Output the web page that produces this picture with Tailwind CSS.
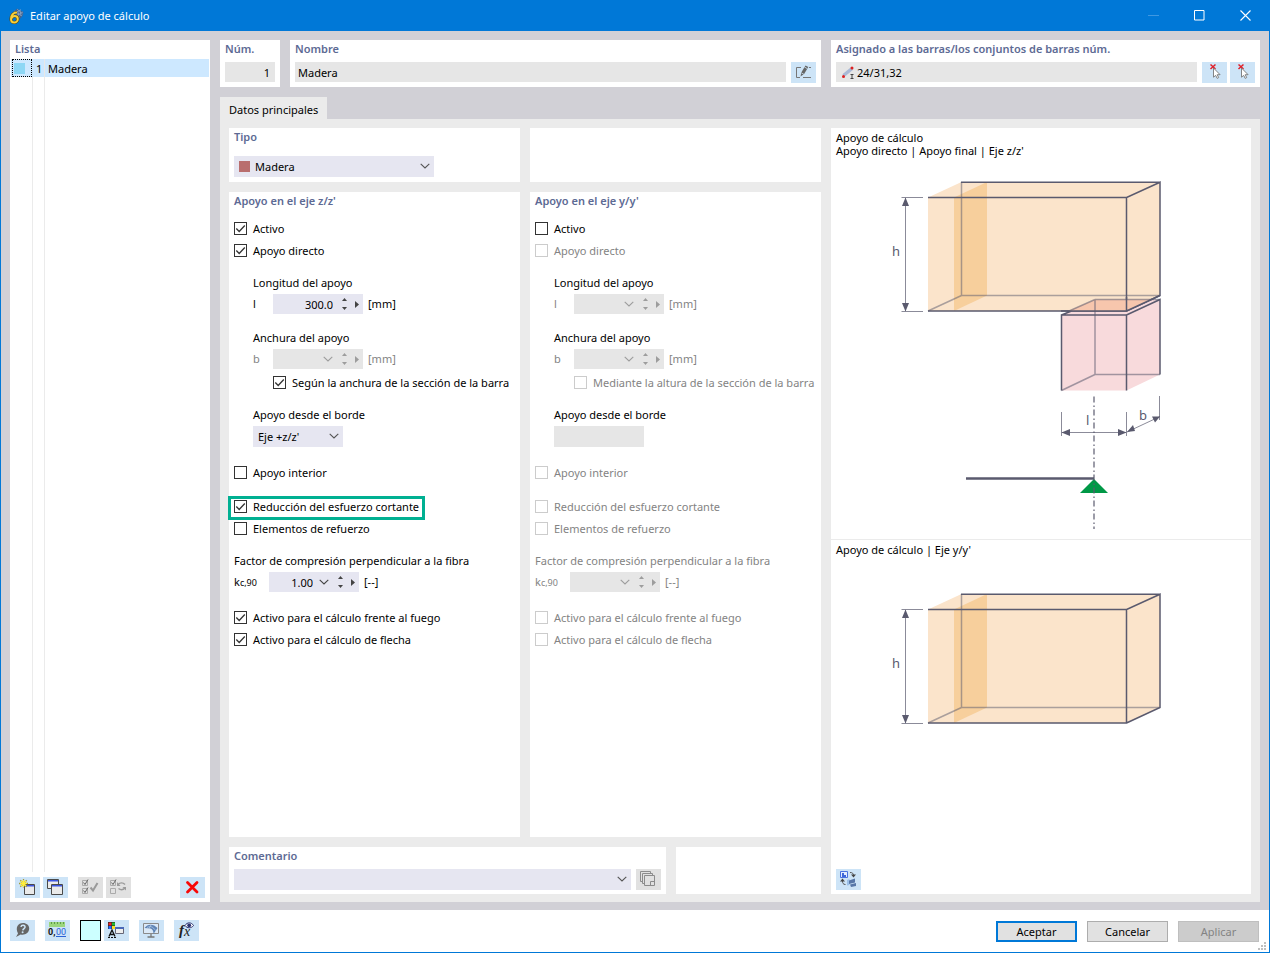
<!DOCTYPE html>
<html lang="es">
<head>
    <meta charset="UTF-8">
    <meta name="viewport" content="width=device-width, initial-scale=1.0">
    <title>Editar apoyo de cálculo</title>
    <!-- Tailwind CSS CDN -->
    <script src="https://cdn.jsdelivr.net/npm/@tailwindcss/browser@4"></script>
</head>
<body class="flex min-h-screen flex-col border border-[#0078d7] bg-white font-['Noto_Sans','Open_Sans',sans-serif] text-[11px] leading-[18px] text-black">

    <!-- Shared icons -->
    <svg class="hidden">
        <symbol id="chevron" viewBox="0 0 10 6"><path d="M.7.8 5 5 9.300.8" fill="none" stroke="currentColor" stroke-width="1.100"/></symbol>
        <symbol id="up" viewBox="0 0 5 3"><path d="M0 3 2.500 0 5 3z" fill="currentColor"/></symbol>
        <symbol id="down" viewBox="0 0 5 3"><path d="M0 0 2.500 3 5 0z" fill="currentColor"/></symbol>
        <symbol id="play" viewBox="0 0 4 7"><path d="M0 0 4 3.500 0 7z" fill="currentColor"/></symbol>
        <symbol id="tick" viewBox="0 0 13 13"><path d="M2.300 6.500 5.200 9.500 10.800 3.500" fill="none" stroke="#333" stroke-width="1.300"/></symbol>
        <symbol id="pick" viewBox="0 0 25 21">
            <path d="M8.500 2.500l5 4.500M13.500 2.500l-5 4.500" stroke="#e0202a" stroke-width="1.500"/>
            <path d="M11.500 6v9.200l2.200-1.800 1.500 3 1.500-.8-1.500-2.900h2.900z" fill="#fff" stroke="#777" stroke-width=".9"/>
        </symbol>
        <!-- Timber beam with the slab at its cut end -->
        <symbol id="beam" viewBox="0 0 420 160" overflow="visible">
            <path d="M97 39.500 130.500 24H329v113.500L295.500 153H97z" fill="#fbe4cb"/>
            <path d="M123 39.500 156 24v113.500L123 153z" fill="#f7cf9c"/>
            <path d="M130.500 24v113.500H329M97 153l33.500-15.500" fill="none" stroke="#5a5a6e" stroke-opacity=".5" stroke-width="1.500"/>
            <path d="M130 24.200H329M97 39.500H295.500M97 153H295.500V39.500L329 24.200V137.500L295.500 153" fill="none" stroke="#5a5a6e" stroke-width="1.500"/>
            <path d="M70.500 39.500H92M70.500 153.500H92M74.500 40V153" stroke="#5a5a6e" stroke-opacity=".7" fill="none"/>
            <path d="M74.500 39.500l3.500 8.500h-7zM74.500 153.500l3.500-8.500h-7z" fill="#5a5a6e"/>
            <text x="61" y="98" font-family="Noto Sans" font-size="13" fill="#5a5a6e">h</text>
        </symbol>
    </svg>

    <!-- Title bar -->
    <header class="flex h-[30px] items-center bg-[#0078d7] pr-px pl-[7px] text-white">
        <svg class="mr-[6px] h-4 w-4" viewBox="0 0 16 16">
            <path d="M4.500 4.500 9 0.500l6.500 3.500-1 4-3.500 4-2-5z" fill="#3f6393"/>
            <path d="M6 3l8 5M9 1l5.500 5M7 5l6-3.500M9 7l6-3M11 10l-1-7M13 8l-1-6" stroke="#a9b9cf" stroke-width=".5"/>
            <path d="M9 4.500C5 4.500 3 7.500 3 11c0 2 1.300 3.500 3.200 3.500S9.800 13 9.800 11 8.500 8 6.600 8C5.400 8 4 9 3.500 10.500" fill="none" stroke="#5b4a10" stroke-width="3.200"/>
            <path d="M9 4.500C5 4.500 3 7.500 3 11c0 2 1.300 3.500 3.200 3.500S9.800 13 9.800 11 8.500 8 6.600 8C5.400 8 4 9 3.500 10.500" fill="none" stroke="#f8cf3a" stroke-width="2"/>
        </svg>
        <h1 class="flex-1 text-[11px]">Editar apoyo de cálculo</h1>
        <button type="button" aria-label="Minimizar" disabled class="grid h-[30px] w-[46px] place-items-center text-[#3f98e2]">
            <svg class="h-[11px] w-[11px]" viewBox="0 0 11 11"><path d="M0 4.500h11" stroke="currentColor"/></svg>
        </button>
        <button type="button" aria-label="Maximizar" class="grid h-[28px] w-[46px] place-items-center self-start">
            <svg class="h-[11px] w-[11px]" viewBox="0 0 11 11"><path d="M.5.5h9.500v9.500H.5z" fill="none" stroke="currentColor"/></svg>
        </button>
        <button type="button" aria-label="Cerrar" class="grid h-[28px] w-[46px] place-items-center self-start">
            <svg class="h-[11px] w-[11px]" viewBox="0 0 11 11"><path d="M.5.5l10 10M10.500.5l-10 10" stroke="currentColor" stroke-width="1.100"/></svg>
        </button>
    </header>

    <main class="flex flex-1 gap-[10px] bg-[#d1d0d6] px-[9px] pt-[9px] pb-2">
        <!-- List of design supports -->
        <aside class="flex w-[200px] shrink-0 flex-col bg-white">
            <h2 class="px-[5px] font-semibold text-[#5d6a94]">Lista</h2>
            <ul class="flex flex-1 flex-col px-px pt-px">
                <li class="flex h-[18px] items-center bg-[#cde8ff] leading-5">
                    <span class="ml-px flex h-[18px] w-5 items-center border border-dotted border-black pl-px"><span class="h-[11px] w-[11px] bg-[#8dd7f5]"></span></span>
                    <span class="h-[18px] w-[13px] border-r border-[#e8e8e8] pl-1">1</span>
                    <span class="h-[18px] pl-[3px]">Madera</span>
                </li>
                <li class="flex flex-1" aria-hidden="true">
                    <span class="ml-[21px] w-[13px] border-x border-[#ebebeb]"></span>
                </li>
            </ul>
            <div class="flex h-[30px] items-center px-[5px]">
                <button type="button" aria-label="Nuevo" class="h-[21px] w-[25px] bg-[#cde4f7]">
                    <svg class="h-[21px] w-[25px]" viewBox="0 0 25 21">
                        <path d="M9.500 7.500h10v10h-10z" fill="#eaeaea" stroke="#4a4a4a"/><path d="M10 8h9v1.500h-9z" fill="#3c55e0"/>
                        <path d="M8.500 2v8.500M4 6.500h9M5.300 3.300l6.400 6.400M11.700 3.300l-6.400 6.400" stroke="#a39a3a" stroke-width="1.300"/><path d="M8.500 3v7M5 6.500h7M6 4l5 5M11 4 6 9" stroke="#ffee3c" stroke-width="1.200"/>
                    </svg>
                </button>
                <button type="button" aria-label="Copiar" class="ml-[3px] h-[21px] w-[25px] bg-[#cde4f7]">
                    <svg class="h-[21px] w-[25px]" viewBox="0 0 25 21">
                        <path d="M4.500 2.500h11v9h-11z" fill="#eaeaea" stroke="#4a4a4a"/><path d="M5 3h10v1.500H5z" fill="#3c55e0"/>
                        <path d="M8.500 7.500h11v10h-11z" fill="#eaeaea" stroke="#4a4a4a"/><path d="M9 8h10v1.500H9z" fill="#3c55e0"/>
                    </svg>
                </button>
                <button type="button" aria-label="Marcar todo" disabled class="ml-[10px] h-[21px] w-[25px] bg-[#e1e1e1]">
                    <svg class="h-[21px] w-[25px]" viewBox="0 0 25 21" fill="none" stroke="#666">
                        <path d="M4.500 3.500h5v5h-5zM4.500 11.500h5v5h-5z" stroke="#aaa"/><path d="M5.500 5.500l1.500 2 3-5M5.500 13.500l1.500 2 3-5"/><path d="M12.500 10.500l2.500 3 4.500-7.500" stroke="#9a9a9a" stroke-width="2"/>
                    </svg>
                </button>
                <button type="button" aria-label="Invertir marcas" disabled class="ml-[3px] h-[21px] w-[25px] bg-[#e1e1e1]">
                    <svg class="h-[21px] w-[25px]" viewBox="0 0 25 21" fill="none" stroke="#666">
                        <path d="M4.500 3.500h5v5h-5zM4.500 11.500h5v5h-5z" stroke="#aaa"/><path d="M5.500 5.500l1.500 2 3-5"/>
                        <path d="M12 7.500c2-2 5-2 7 0M19 11c-2 2-4.500 2-6.500.5" stroke="#9a9a9a" stroke-width="1.500"/><path d="M11 5v4h3.500zM20 13.500V10h-3.500z" fill="#9a9a9a" stroke="none"/>
                    </svg>
                </button>
                <button type="button" aria-label="Eliminar" class="ml-auto h-[21px] w-[25px] bg-[#cde4f7]">
                    <svg class="h-[21px] w-[25px]" viewBox="0 0 25 21"><path d="M7.500 5.500l9.500 9.500M17 5.500 7.500 15" stroke="#f80808" stroke-width="2.800" stroke-linecap="round"/></svg>
                </button>
            </div>
        </aside>

        <div class="flex min-w-0 flex-1 flex-col">
            <div class="flex gap-[10px]">
                <section class="w-[60px] bg-white px-[5px] pb-[5px]">
                    <label for="num" class="mb-1 block font-semibold text-[#5d6a94]">Núm.</label>
                    <input id="num" type="text" value="1" readonly class="block h-5 w-full bg-[#e6e6e6] pr-[5px] text-right">
                </section>
                <section class="min-w-0 flex-1 bg-white px-[5px] pb-1">
                    <label for="name" class="mb-1 block font-semibold text-[#5d6a94]">Nombre</label>
                    <div class="flex gap-[5px]">
                        <input id="name" type="text" value="Madera" readonly class="h-5 min-w-0 flex-1 bg-[#e6e6e6] px-[3px]">
                        <button type="button" aria-label="Editar nombre" class="h-[21px] w-[25px] bg-[#cde4f7]">
                            <svg class="h-[21px] w-[25px]" viewBox="0 0 25 21">
                                <path d="M10 5.500H5.500v10H9M12 15.500h8M18 5.500h2" fill="none" stroke="#777"/>
                                <path d="M9.500 14.500l.8-4 4.200-7 2.800 1.600-4.200 7z" fill="#666"/><path d="M10.300 10.800l2.600 1.500M13.500 5l2.700 1.600" stroke="#cde4f7" stroke-width=".8"/>
                            </svg>
                        </button>
                    </div>
                </section>
                <section class="w-[429px] bg-white px-[5px] pb-1">
                    <label for="members" class="mb-1 block font-semibold text-[#5d6a94]">Asignado a las barras/los conjuntos de barras núm.</label>
                    <div class="flex">
                        <div class="flex h-5 flex-1 items-center bg-[#e6e6e6] pl-[6px]">
                            <svg class="h-[13px] w-[13px]" viewBox="0 0 13 13">
                                <path d="M1.500 9.500 10 2.500" stroke="#a9b9d6" stroke-width="3.500"/><circle cx="1.500" cy="10.500" r="1.500" fill="#dd2020"/><circle cx="10" cy="2" r="1.500" fill="#dd2020"/>
                                <path d="M8.500 8.500h3M8.500 12.500h3M10 8.500v4" stroke="#444"/>
                            </svg>
                            <input id="members" type="text" value="24/31,32" readonly class="ml-[2px] h-5 min-w-0 flex-1 bg-transparent">
                        </div>
                        <button type="button" aria-label="Seleccionar barras" class="ml-[5px] h-[21px] w-[25px] bg-[#cde4f7]"><svg class="h-[21px] w-[25px]"><use href="#pick"/></svg></button>
                        <button type="button" aria-label="Seleccionar conjuntos" class="ml-[3px] h-[21px] w-[25px] bg-[#cde4f7]"><svg class="h-[21px] w-[25px]"><use href="#pick"/></svg></button>
                    </div>
                </section>
            </div>

            <nav class="mt-[10px] flex">
                <button type="button" class="h-[22px] bg-[#ebebeb] px-[9px] pt-1">Datos principales</button>
            </nav>

            <div class="flex flex-1 gap-[10px] bg-[#ebebeb] px-[9px] pt-[9px] pb-2">
                <div class="flex min-w-0 flex-1 flex-col gap-[10px]">
                    <div class="grid grid-cols-2 gap-[10px]">
                        <section class="h-[54px] bg-white px-[5px]">
                            <label for="type" class="mb-[10px] block font-semibold text-[#5d6a94]">Tipo</label>
                            <div class="relative h-[21px] w-[200px]">
                                <select id="type" class="h-[21px] w-full appearance-none bg-[#e6e6f1] pl-[21px]"><option>Madera</option></select>
                                <span class="pointer-events-none absolute top-[5px] left-[5px] h-[11px] w-[11px] bg-[#b96e6e]"></span>
                                <svg class="pointer-events-none absolute top-[7px] right-1 h-[6px] w-[10px] text-[#555]"><use href="#chevron"/></svg>
                            </div>
                        </section>
                        <section class="bg-white"></section>
                    </div>
                    <div id="axes" class="grid flex-1 grid-cols-2 gap-[10px]"></div>
                    <div class="flex gap-[10px]">
                        <section class="min-w-0 flex-1 bg-white px-[5px] pb-1">
                            <label for="comment" class="mb-1 block font-semibold text-[#5d6a94]">Comentario</label>
                            <div class="flex gap-[5px]">
                                <div class="relative flex-1">
                                    <select id="comment" class="block h-[21px] w-full appearance-none bg-[#e6e6f1]"><option></option></select>
                                    <svg class="pointer-events-none absolute top-[7px] right-1 h-[6px] w-[10px] text-[#555]"><use href="#chevron"/></svg>
                                </div>
                                <button type="button" aria-label="Comentarios guardados" disabled class="h-[21px] w-[25px] bg-[#e1e1e1]">
                                    <svg class="h-[21px] w-[25px]" viewBox="0 0 25 21" fill="none" stroke="#8c8c8c">
                                        <path d="M6.500 12.500h-2v-10h10v2M8.500 14.500h-2v-10h10v2M8.500 6.500h10v10h-10zM14.500 16.500v-4h4"/>
                                    </svg>
                                </button>
                            </div>
                        </section>
                        <section class="w-[145px] bg-white"></section>
                    </div>
                </div>

                <!-- Diagrams -->
                <section class="flex w-[420px] shrink-0 flex-col bg-white">
                    <div class="h-[411px] pt-[3px] leading-[13px]">
                        <p class="px-[5px]">Apoyo de cálculo</p>
                        <p class="px-[5px]">Apoyo directo | Apoyo final | Eje z/z'</p>
                        <svg class="mt-px h-[381px] w-full" viewBox="0 0 420 381">
                            <path d="M230.500 157 264 141.500H329v75L295.500 232.500h-65z" fill="#f8dadc"/>
                            <use href="#beam" width="420" height="160"/>
                            <path d="M237 153 264 141.500h56L295.500 153z" fill="#f7c6ad"/>
                            <path d="M264 141.500v75H329M230.500 232.500l33.500-16M264 141.500H329M237 153.500l27-12" fill="none" stroke="#5a5a6e" stroke-opacity=".55" stroke-width="1.500"/>
                            <path d="M230.500 232.500V157H295.500v75.500M295.500 157 329 141.500v75M230.500 157l10-4M295.500 153v-14M295.500 153 329 137.500M230 153h66" fill="none" stroke="#5a5a6e" stroke-width="1.500"/>
                            <path d="M230.500 254v24M295.500 254v24M328.500 238v24M231 274.500h64M296 274l33-15.500" fill="none" stroke="#5a5a6e" stroke-opacity=".7"/>
                            <path d="M230.500 274.500l8.500-3.500v7zM295.500 274.500l-8.500-3.500v7zM296 274l6-7 2 6zM329 258.500l-8 0 3 6z" fill="#5a5a6e"/>
                            <text x="255" y="267" font-family="Noto Sans" font-size="13" fill="#5a5a6e">l</text>
                            <text x="308" y="262" font-family="Noto Sans" font-size="13" fill="#5a5a6e">b</text>
                            <path d="M135 320.500h128" stroke="#5a5a6e" stroke-width="2.600"/>
                            <path d="M263 321l14 14h-28z" fill="#009846"/>
                            <path d="M263 238.500V371" stroke="#5a5a6e" stroke-opacity=".8" stroke-width="1.500" stroke-dasharray="6 3 1.500 2.500"/>
                        </svg>
                    </div>
                    <div class="border-t border-[#ebebeb] pt-[3px] leading-[13px]">
                        <p class="px-[5px]">Apoyo de cálculo | Eje y/y'</p>
                        <div class="pt-[14px]">
                            <svg class="h-[160px] w-full" viewBox="0 0 420 160"><use href="#beam" width="420" height="160"/></svg>
                        </div>
                    </div>
                    <button type="button" aria-label="Cambiar vista" class="mt-auto mb-1 ml-[5px] h-[21px] w-[25px] bg-[#cde4f7]">
                        <svg class="h-[21px] w-[25px]" viewBox="0 0 25 21">
                            <path d="M4.500 2.500h7v6h-7z" fill="#e3edff" stroke="#4a73e0"/><path d="M6 4h2v2h2v2H6z" fill="#3e68d8"/>
                            <path d="M14 3.500c2.500 0 3.500 1 3.500 3M9.500 15.500c-2.500 0-3-1.500-3-3.500" fill="none" stroke="#555"/><path d="M15 5.500h5l-2.500 3zM4 12.500h5l-2.500-3z" fill="#444"/>
                            <path d="M11 11l2.500-1v6l-2.500.5z" fill="#9cc0e8"/><path d="M13 11.500l6-2v4l-6 1.500zM14 15.500l6-1.500v3l-5 1z" fill="#5877a8"/>
                        </svg>
                    </button>
                </section>
            </div>
        </div>
    </main>

    <!-- Footer -->
    <footer class="relative flex h-[42px] shrink-0 items-start bg-white px-[9px] pt-[10px]">
        <button type="button" aria-label="Ayuda" class="h-[21px] w-[25px] bg-[#cde4f7]">
            <svg class="h-[21px] w-[25px]" viewBox="0 0 25 21"><path d="M6 17l2-3.500C5 7.500 8 3 13 3c3.500 0 6.200 2.300 6.200 5.500 0 4.500-4.500 7-8.500 6z" fill="#666"/><path d="M11 7c.3-2.500 4.500-2.100 4 .3-.3 1.300-2 1.300-2.200 3" fill="none" stroke="#cde4f7" stroke-width="1.500"/><circle cx="12.600" cy="12.300" r="1" fill="#cde4f7"/></svg>
        </button>
        <button type="button" aria-label="Unidades y decimales" class="ml-[10px] h-[21px] w-[25px] bg-[#cde4f7]">
            <svg class="h-[21px] w-[25px]" viewBox="0 0 25 21">
                <path d="M4 2h16v5H4z" fill="#9bd67d"/><path d="M6.500 2v2M9.500 2v2M12.500 2v2M15.500 2v2M18.500 2v2" stroke="#5f9c48"/>
                <text x="3" y="15" font-family="Roboto" font-size="9" font-weight="700" fill="#111">0,</text><text x="11" y="15" font-family="Roboto" font-size="9" fill="#2b62d6">00</text><path d="M11 16.500h10" stroke="#2b62d6"/>
            </svg>
        </button>
        <button type="button" aria-label="Color" class="ml-[10px] h-[21px] w-[21px] border border-black bg-[#ccffff]"></button>
        <button type="button" aria-label="Propiedades de visualización" class="ml-[3px] h-[21px] w-[25px] bg-[#cde4f7]">
            <svg class="h-[21px] w-[25px]" viewBox="0 0 25 21">
                <path d="M4 2h7v7H4z" fill="#222"/><path d="M4.500 2.500h3v3h-3z" fill="#e22"/><path d="M8 2.500h3v3H8z" fill="#2b3"/><path d="M4.500 6h3v3h-3z" fill="#26f"/><path d="M8 6h3v3H8z" fill="#fd2"/>
                <path d="M5 16.500l3-6.500 3 6.500M6 14.500h4" fill="none" stroke="#111" stroke-width="1.300"/><path d="M4 17.500h8" stroke="#111" stroke-dasharray="2 1"/>
                <path d="M11.500 7.500h8v6h-8z" fill="#eee" stroke="#667"/><path d="M11 7h9v2h-9z" fill="#4a68b8"/>
            </svg>
        </button>
        <button type="button" aria-label="Vista" class="ml-[10px] h-[21px] w-[25px] bg-[#cde4f7]">
            <svg class="h-[21px] w-[25px]" viewBox="0 0 25 21">
                <path d="M4.500 3.500h15v10h-15z" fill="#dbe9f7" stroke="#8a8a8a"/><path d="M12 14v3M8.500 17h7" stroke="#777" stroke-width="1.300"/>
                <path d="M5.500 8c3-4.500 9-4.500 13 0l-4 6c0-4-1.500-5-3-5.500z" fill="#5f84b5"/><path d="M8 7.500c4-2 6-.5 8.500 3M12 5l-2 3.500" stroke="#bcd3ec" fill="none" stroke-width=".7"/>
            </svg>
        </button>
        <button type="button" aria-label="Fórmulas" class="ml-[10px] h-[21px] w-[25px] bg-[#cde4f7]">
            <svg class="h-[21px] w-[25px]" viewBox="0 0 25 21">
                <text x="5" y="15" font-family="Liberation Serif" font-size="15" font-style="italic" font-weight="700" fill="#222">f</text><text x="10" y="16" font-family="Liberation Serif" font-size="14" font-style="italic" fill="#222">x</text>
                <path d="M11 5.500c2-3.500 6.500-3.500 8.500 0-2 3-6.500 3-8.500 0z" fill="#fff" stroke="#2b3270"/><circle cx="15.200" cy="5.300" r="1.900" fill="#2b3270"/>
            </svg>
        </button>
        <div class="mr-px ml-auto flex gap-[10px] pt-px">
            <button type="button" class="h-[21px] w-[81px] border-2 border-[#0078d7] bg-[#e1e1e1] leading-[17px]">Aceptar</button>
            <button type="button" class="h-[21px] w-[81px] border border-[#adadad] bg-[#e1e1e1]">Cancelar</button>
            <button type="button" disabled class="h-[21px] w-[81px] border border-[#bfbfbf] bg-[#cccccc] text-[#838383]">Aplicar</button>
        </div>
        <svg class="absolute right-[3px] bottom-[2px] h-2 w-2" viewBox="0 0 8 8"><path d="M6 0h2v2H6zM3 3h2v2H3zM6 3h2v2H6zM0 6h2v2H0zM3 6h2v2H3zM6 6h2v2H6z" fill="#bfbfbf"/></svg>
    </footer>

    <script>
        // One entry per support axis
        const axes = [
            {
                id: 'z', title: "Apoyo en el eje z/z'", active: true,
                byWidth: 'Según la anchura de la sección de la barra', length: '300.0', edge: "Eje +z/z'", factor: '1.00'
            },
            {
                id: 'y', title: "Apoyo en el eje y/y'", active: false,
                byWidth: 'Mediante la altura de la sección de la barra', length: '', edge: '', factor: ''
            }
        ];

        // Tick box with its label
        function checkbox(id, text, checked, enabled, marked = false) {
            return `
                <label for="${id}" class="relative flex h-[22px] w-fit items-start gap-[6px] pt-1 leading-[14px] whitespace-nowrap ${enabled ? 'text-black' : 'text-[#838383]'}">
                    <span class="relative h-[13px] w-[13px]">
                        <input id="${id}" type="checkbox" ${checked ? 'checked' : ''} ${enabled ? '' : 'disabled'} class="peer block h-[13px] w-[13px] appearance-none border border-[#333] bg-white disabled:border-[#ccc]">
                        <svg class="pointer-events-none absolute inset-0 hidden h-[13px] w-[13px] peer-checked:block"><use href="#tick"/></svg>
                    </span>
                    ${text}
                    ${marked ? '<span class="absolute top-0 -right-[6px] -left-[6px] h-6 border-3 border-[#00b092]"></span>' : ''}
                </label>`;
        }

        // Number box with drop-down, spin and step buttons
        function numberField(id, value, enabled, dropdown) {
            return `
                <div class="relative h-5 w-[90px] ${enabled ? 'bg-[#e6e6f1] text-[#444]' : 'bg-[#e6e6e6] text-[#9d9d9d]'}">
                    <input id="${id}" type="text" value="${value}" ${enabled ? '' : 'disabled'} class="block h-5 w-full bg-transparent text-right text-black ${dropdown ? 'pr-[46px]' : 'pr-[30px]'}">
                    ${dropdown ? `<button type="button" aria-label="Valores" ${enabled ? '' : 'disabled'} class="absolute top-[7px] right-[30px] h-[6px] w-[10px]"><svg class="block h-[6px] w-[10px]"><use href="#chevron"/></svg></button>` : ''}
                    <button type="button" aria-label="Aumentar" ${enabled ? '' : 'disabled'} class="absolute top-1 right-4 h-[3px] w-[5px]"><svg class="block h-[3px] w-[5px]"><use href="#up"/></svg></button>
                    <button type="button" aria-label="Reducir" ${enabled ? '' : 'disabled'} class="absolute top-[13px] right-4 h-[3px] w-[5px]"><svg class="block h-[3px] w-[5px]"><use href="#down"/></svg></button>
                    <button type="button" aria-label="Más" ${enabled ? '' : 'disabled'} class="absolute top-[7px] right-1 h-[7px] w-1"><svg class="block h-[7px] w-1"><use href="#play"/></svg></button>
                </div>`;
        }

        function edgeField(axis) {
            if (!axis.active) {
                return `<select id="edge-${axis.id}" disabled class="mt-[2px] block h-[21px] w-[90px] appearance-none bg-[#e6e6e6] opacity-100"></select>`;
            }
            return `
                <div class="relative mt-[2px] h-[21px] w-[90px]">
                    <select id="edge-${axis.id}" class="block h-[21px] w-full appearance-none bg-[#e6e6f1] pl-[5px]"><option>${axis.edge}</option></select>
                    <svg class="pointer-events-none absolute top-[7px] right-1 h-[6px] w-[10px] text-[#555]"><use href="#chevron"/></svg>
                </div>`;
        }

        function axisPanel(axis) {
            const on = axis.active;
            const id = axis.id;
            const tone = on ? 'text-black' : 'text-[#838383]';
            return `
                <section class="bg-white px-[5px] pb-5">
                    <h2 class="mb-2 font-semibold text-[#5d6a94]">${axis.title}</h2>
                    ${checkbox('active-' + id, 'Activo', on, true)}
                    ${checkbox('direct-' + id, 'Apoyo directo', on, on)}
                    <div class="pl-[19px]">
                        <label for="length-${id}" class="mt-3 block">Longitud del apoyo</label>
                        <div class="mt-[2px] flex items-center ${tone}">
                            <span class="w-5">l</span>${numberField('length-' + id, axis.length, on, !on)}<span class="ml-[5px]">[mm]</span>
                        </div>
                        <label for="width-${id}" class="mt-[15px] block">Anchura del apoyo</label>
                        <div class="mt-[2px] flex items-center text-[#838383]">
                            <span class="w-5">b</span>${numberField('width-' + id, '', false, true)}<span class="ml-[5px]">[mm]</span>
                        </div>
                        <div class="mt-[3px] pl-5">${checkbox('section-' + id, axis.byWidth, on, on)}</div>
                        <label for="edge-${id}" class="mt-3 block">Apoyo desde el borde</label>
                        ${edgeField(axis)}
                    </div>
                    <div class="mt-[15px]">${checkbox('inner-' + id, 'Apoyo interior', false, on)}</div>
                    <div class="mt-3">
                        ${checkbox('shear-' + id, 'Reducción del esfuerzo cortante', on, on, on)}
                        ${checkbox('reinf-' + id, 'Elementos de refuerzo', false, on)}
                    </div>
                    <label for="factor-${id}" class="mt-3 block ${tone}">Factor de compresión perpendicular a la fibra</label>
                    <div class="mt-[2px] flex items-center ${tone}">
                        <span class="w-[35px]">k<sub class="bottom-0 align-baseline text-[9px]">c,90</sub></span>${numberField('factor-' + id, axis.factor, on, true)}<span class="ml-[5px]">[--]</span>
                    </div>
                    <div class="mt-[15px]">
                        ${checkbox('fire-' + id, 'Activo para el cálculo frente al fuego', on, on)}
                        ${checkbox('deflection-' + id, 'Activo para el cálculo de flecha', on, on)}
                    </div>
                </section>`;
        }

        document.getElementById('axes').innerHTML = axes.map(axisPanel).join('');
    </script>
</body>
</html>
